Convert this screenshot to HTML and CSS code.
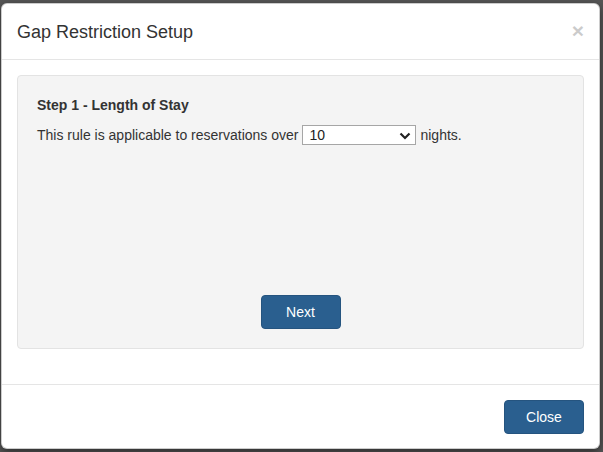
FILE: index.html
```html
<!DOCTYPE html>
<html>
<head>
<meta charset="utf-8">
<link rel="stylesheet" href="styles.css">
</head>
<body>
<div class="backdrop">
  <div class="modal">
    <div class="modal-header">
      <h4 class="modal-title">Gap Restriction Setup</h4>
      <span class="close">×</span>
    </div>
    <div class="modal-body">
      <div class="well">
        <div class="step-title">Step 1 - Length of Stay</div>
        <div class="rule-row">
          <span>This rule is applicable to reservations over</span>
          <span class="select-wrap">
            <select class="nights">
              <option>10</option>
            </select>
            <svg class="chev" width="12" height="8" viewBox="0 0 12 8"><path d="M1.5 1.5 L6 6 L10.5 1.5" fill="none" stroke="#222" stroke-width="2.2"/></svg>
          </span>
          <span>nights.</span>
        </div>
        <div class="next-row">
          <button class="btn">Next</button>
        </div>
      </div>
    </div>
    <div class="modal-footer">
      <button class="btn">Close</button>
    </div>
  </div>
</div>
</body>
</html>
```
FILE: styles.css
```css
html, body {
  margin: 0;
  padding: 0;
  height: 100%;
}
body {
  font-family: "Liberation Sans", Arial, sans-serif;
  font-size: 14px;
  color: #333;
  background: #565656;
}
.backdrop {
  box-sizing: border-box;
  height: 452px;
  padding: 3px 3px 3px 1px;
}
.modal {
  box-sizing: border-box;
  width: 599px;
  height: 446px;
  background: #fff;
  border: 1px solid rgba(0,0,0,0.2);
  border-radius: 6px;
  box-shadow: 0 3px 9px rgba(0,0,0,0.5);
  display: flex;
  flex-direction: column;
}
.modal-header {
  display: flex;
  justify-content: space-between;
  align-items: flex-start;
  padding: 15px 15px 14px 15px;
  border-bottom: 1px solid #e5e5e5;
}
.modal-title {
  margin: 0;
  font-size: 18px;
  font-weight: normal;
  line-height: 26px;
  color: #333;
}
.close {
  font-size: 21px;
  font-weight: bold;
  line-height: 1;
  color: #000;
  opacity: 0.2;
  margin-top: 1px;
  margin-right: 0;
}
.modal-body {
  padding: 15px;
}
.well {
  box-sizing: border-box;
  height: 274px;
  margin-bottom: 20px;
  padding: 19px 19px 19px 19px;
  background: #f4f4f4;
  border: 1px solid #e3e3e3;
  border-radius: 4px;
  display: flex;
  flex-direction: column;
}
.step-title {
  font-weight: bold;
  font-size: 14px;
  line-height: 20px;
  color: #333;
}
.rule-row {
  margin-top: 10px;
  display: flex;
  align-items: center;
  gap: 4px;
  font-size: 14px;
  line-height: 20px;
}
.select-wrap {
  position: relative;
  display: inline-block;
  height: 20px;
}
.nights {
  appearance: none;
  -webkit-appearance: none;
  box-sizing: border-box;
  width: 114px;
  height: 20px;
  padding: 0 0 0 6px;
  margin: 0;
  border: 1px solid #a6a6a6;
  border-radius: 0;
  background: #fff;
  font-family: "Liberation Sans", Arial, sans-serif;
  font-size: 14px;
  color: #222;
}
.chev {
  position: absolute;
  right: 5px;
  top: 7px;
  pointer-events: none;
}
.next-row {
  margin-top: auto;
  display: flex;
  justify-content: center;
}
.btn {
  box-sizing: border-box;
  min-width: 80px;
  height: 34px;
  padding: 6px 12px;
  font-family: "Liberation Sans", Arial, sans-serif;
  font-size: 14px;
  color: #fff;
  background: #2a5f8f;
  border: 1px solid #25547f;
  border-radius: 4px;
}
.modal-footer {
  border-top: 1px solid #e5e5e5;
  padding: 15px 15px 15px 15px;
  display: flex;
  justify-content: flex-end;
}
```
